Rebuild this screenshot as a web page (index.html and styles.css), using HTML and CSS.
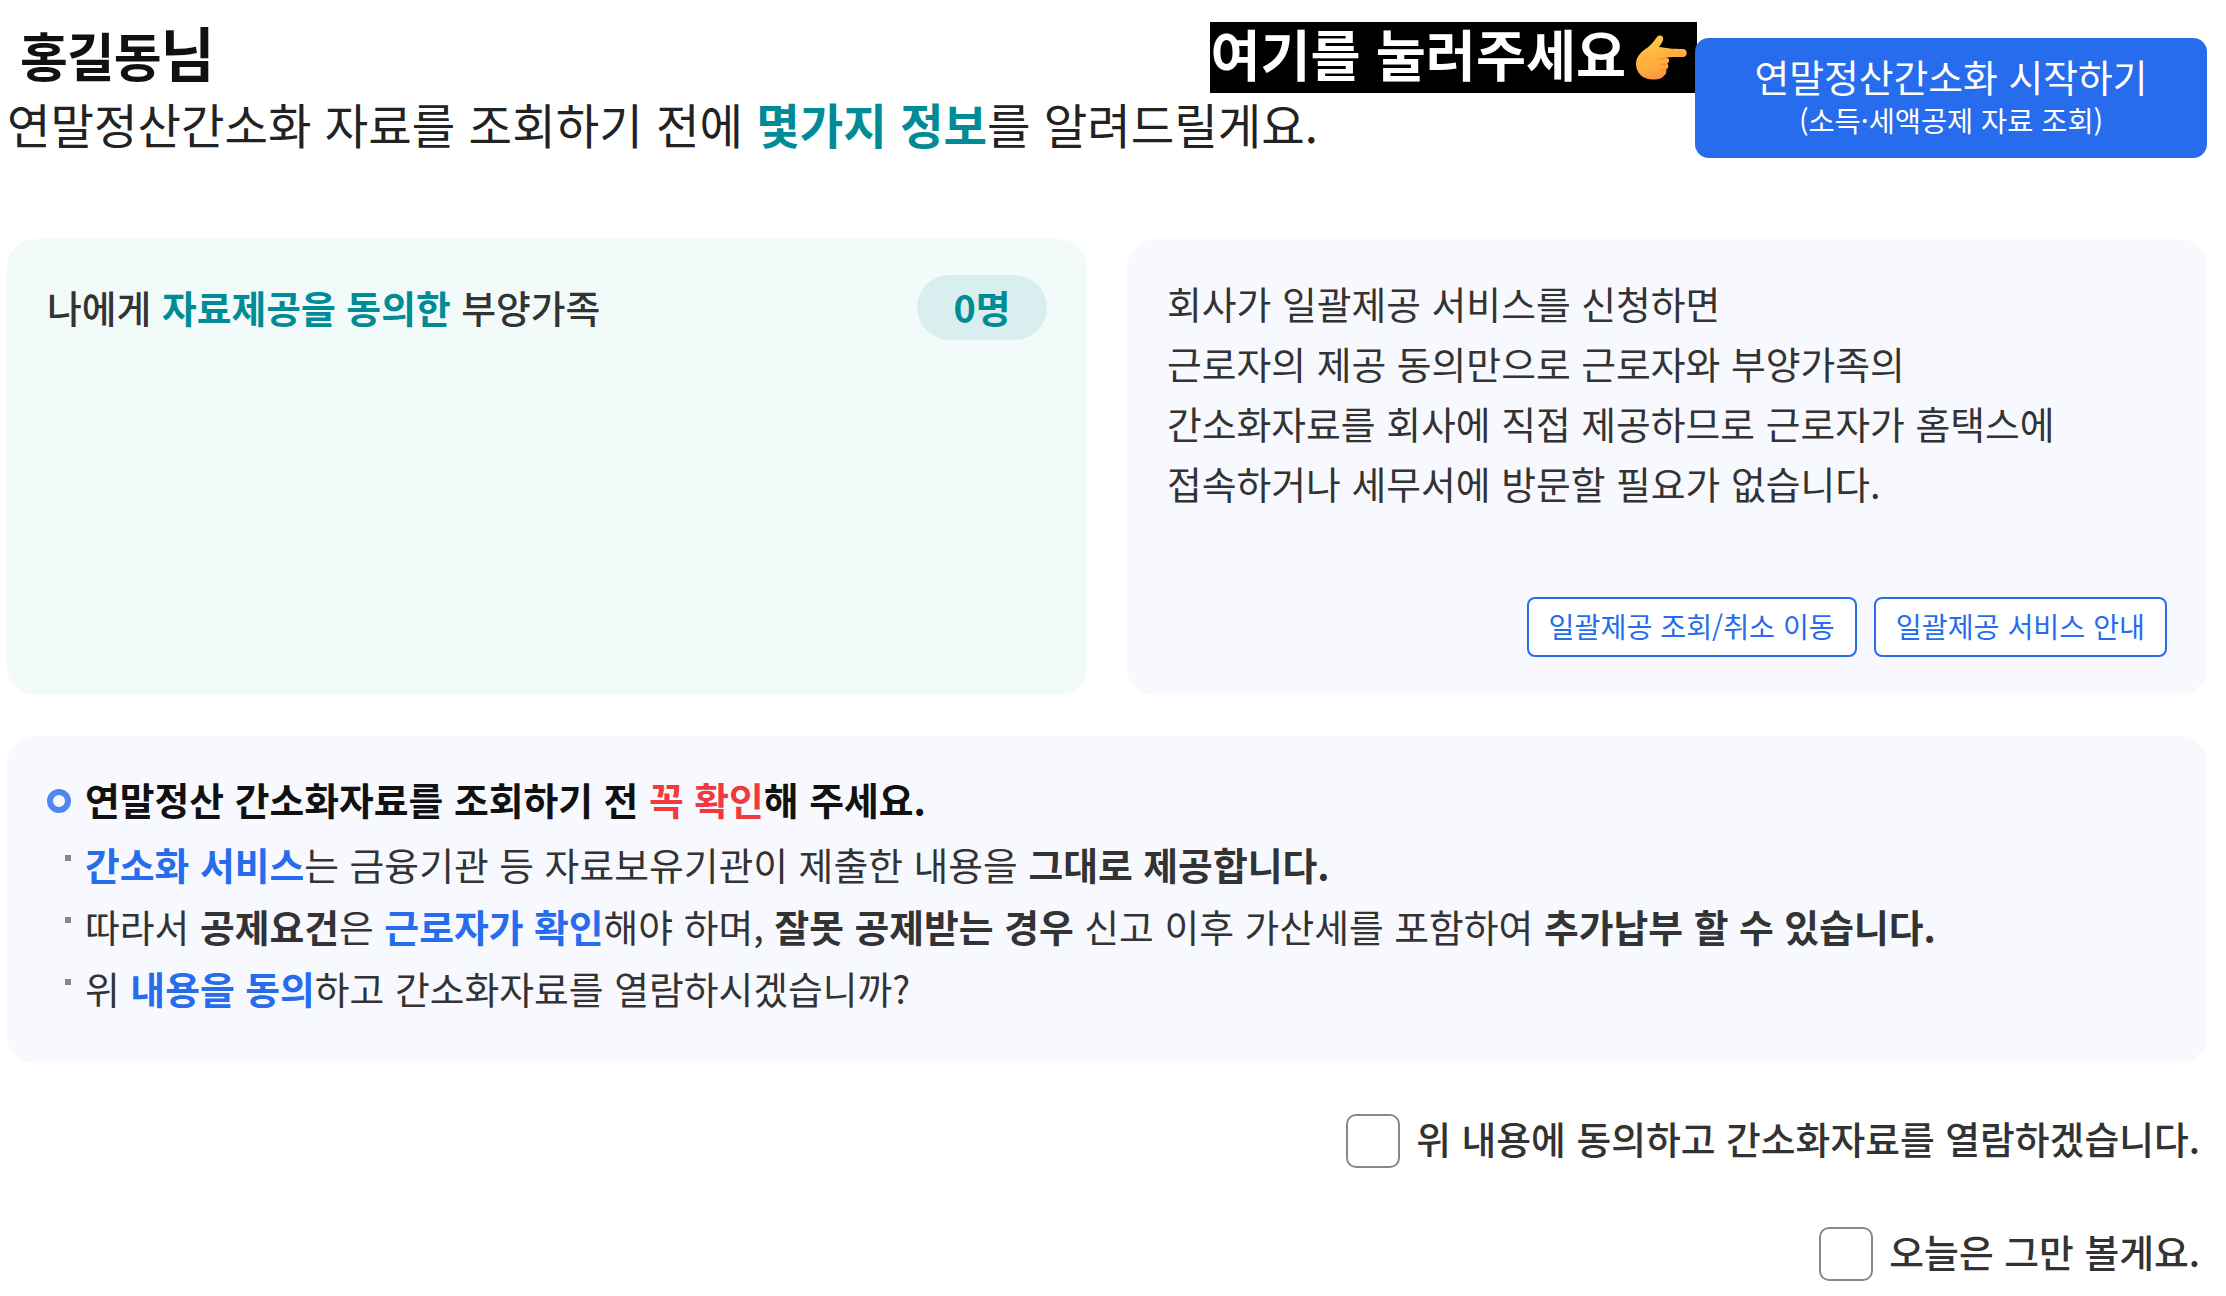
FILE: index.html
```html
<!DOCTYPE html>
<html lang="ko">
<head>
    <meta charset="utf-8">
    <title>연말정산간소화</title>
    <link rel="stylesheet" href="styles.css">
</head>
<body>
    <div class="page">
        <header class="top">
            <div class="intro">
                <h1 class="name">홍길동<span class="name-end">님</span></h1>
                <p class="lead">연말정산간소화 자료를 조회하기 전에 <strong class="teal">몇가지 정보</strong>를 알려드릴게요.</p>
            </div>
            <div class="top-action">
                <div class="hint">
                    <span>여기를 눌러주세요</span>
                    <svg class="hand" viewBox="0 0 56 50" aria-hidden="true">
                        <defs>
                            <linearGradient id="handFill" x1="0.2" y1="0" x2="0.6" y2="1">
                                <stop offset="0" stop-color="#ffc94d"/>
                                <stop offset="0.7" stop-color="#ffa93a"/>
                                <stop offset="1" stop-color="#f58a4a"/>
                            </linearGradient>
                        </defs>
                        <path fill="url(#handFill)" d="M23 3c3-3 7-1 6 3-.5 2-2 4-4 7 7 1 14 2 24 2 5 0 5 8 0 8-7 0-12 0-17 .5 4 0 4 5 1 6 2 1 2 5-1 6 1 2 0 5-2 6-2 3-5 4-10 4C9 46 2 39 2 30 2 22 8 17 13 14c4-3 7-7 10-11z"/>
                        <path fill="none" stroke="#e8902f" stroke-width="1.2" stroke-linecap="round" d="M33 24l-8 1M33 30l-7 .5M32 36l-6 0"/>
                    </svg>
                </div>
                <button class="start-btn" type="button">
                    <span class="start-main">연말정산간소화 시작하기</span>
                    <span class="start-sub">(소득·세액공제 자료 조회)</span>
                </button>
            </div>
        </header>

        <section class="cards">
            <div class="card card-green">
                <div class="family">
                    <p>나에게 <strong class="teal">자료제공을 동의한</strong> 부양가족</p>
                    <span class="count">0명</span>
                </div>
            </div>
            <div class="card card-blue card-info">
                <p class="info">회사가 일괄제공 서비스를 신청하면<br>근로자의 제공 동의만으로 근로자와 부양가족의<br>간소화자료를 회사에 직접 제공하므로 근로자가 홈택스에<br>접속하거나 세무서에 방문할 필요가 없습니다.</p>
                <div class="info-btns">
                    <button class="line-btn" type="button">일괄제공 조회/취소 이동</button>
                    <button class="line-btn" type="button">일괄제공 서비스 안내</button>
                </div>
            </div>
        </section>

        <section class="notice">
            <h2 class="notice-title"><span class="ring"></span><span>연말정산 간소화자료를 조회하기 전 <span class="red">꼭 확인</span>해 주세요.</span></h2>
            <ul class="notice-list">
                <li><strong class="blue">간소화 서비스</strong>는 금융기관 등 자료보유기관이 제출한 내용을 <strong>그대로 제공합니다.</strong></li>
                <li>따라서 <strong>공제요건</strong>은 <strong class="blue">근로자가 확인</strong>해야 하며, <strong>잘못 공제받는 경우</strong> 신고 이후 가산세를 포함하여 <strong>추가납부 할 수 있습니다.</strong></li>
                <li>위 <strong class="blue">내용을 동의</strong>하고 간소화자료를 열람하시겠습니까?</li>
            </ul>
        </section>

        <div class="checks">
            <label class="check"><input type="checkbox"><span>위 내용에 동의하고 간소화자료를 열람하겠습니다.</span></label>
            <label class="check"><input type="checkbox"><span>오늘은 그만 볼게요.</span></label>
        </div>
    </div>
</body>
</html>
```

FILE: styles.css
```css
* {
    box-sizing: border-box;
}

body {
    margin: 0;
    background: #fff;
    color: #333;
    font-family: "Noto Sans CJK KR", "Noto Sans", sans-serif;
}

p, h1, h2, ul {
    margin: 0;
    padding: 0;
}

.page {
    padding: 22px 19px 0 7px;
}

.teal {
    color: #008c96;
    font-weight: 700;
}

.blue {
    color: #266cec;
}

.red {
    color: #f03a40;
}

strong {
    font-weight: 700;
}

/* top */
.top {
    display: flex;
    justify-content: space-between;
    align-items: flex-start;
    height: 217px;
}

.intro {
    flex: none;
    width: 1200px;
    white-space: nowrap;
}

.name {
    padding: 5px 0 0 13px;
    color: #111;
    font-size: 52px;
    font-weight: 700;
    line-height: 50px;
    letter-spacing: -1px;
}

.name-end {
    font-size: 59px;
}

.lead {
    margin-top: 14px;
    color: #222;
    font-size: 47.3px;
    line-height: 60px;
}

.top-action {
    display: flex;
    align-items: flex-start;
}

.hint {
    display: flex;
    align-items: center;
    gap: 8px;
    height: 71px;
    padding: 0 7px 11px 0;
    background: #000;
    color: #fff;
    font-size: 54.4px;
    font-weight: 700;
    white-space: nowrap;
}

.hand {
    width: 56px;
    height: 50px;
    margin-top: 14px;
}

.start-btn {
    display: flex;
    flex-direction: column;
    align-items: center;
    justify-content: center;
    width: 512px;
    height: 120px;
    margin: 16px 0 0 -2px;
    padding: 0 0 7px;
    border: 0;
    border-radius: 14px;
    background: #266cec;
    color: #fff;
    font-family: inherit;
}

.start-main {
    font-size: 37.8px;
    line-height: 50px;
}

.start-sub {
    font-size: 28.4px;
    line-height: 38px;
}

/* cards */
.cards {
    display: flex;
    gap: 40px;
}

.card {
    flex: 1;
    height: 456px;
    border-radius: 28px;
    padding: 35px 40px;
}

.card-green {
    background: #f3fbfa;
}

.card-blue {
    background: #f8f9ff;
}

.family {
    display: flex;
    justify-content: space-between;
    align-items: center;
    font-size: 37.8px;
    font-weight: 500;
}

.family p {
    margin-bottom: 2px;
}

.count {
    width: 130px;
    height: 65px;
    margin-top: 1px;
    border-radius: 33px;
    background: #d9eeee;
    color: #008c96;
    font-size: 37.8px;
    font-weight: 700;
    line-height: 63px;
    text-align: center;
}

.card-info {
    display: flex;
    flex-direction: column;
    justify-content: space-between;
    padding-top: 34px;
    padding-bottom: 38px;
}

.info {
    font-size: 37.8px;
    line-height: 60px;
}

.info-btns {
    display: flex;
    justify-content: flex-end;
    gap: 17px;
}

.line-btn {
    height: 60px;
    padding: 0 20px 4px;
    border: 2px solid #266cec;
    border-radius: 8px;
    background: #fff;
    color: #266cec;
    font-family: inherit;
    font-size: 28.2px;
}

/* notice */
.notice {
    height: 327px;
    margin-top: 41px;
    padding: 38px 40px;
    border-radius: 28px;
    background: #f8f9ff;
}

.notice-title {
    display: flex;
    align-items: center;
    color: #111;
    font-size: 37.8px;
    font-weight: 700;
    line-height: 50px;
}

.ring {
    width: 24px;
    height: 24px;
    margin: 3px 14px 0 0;
    border: 6px solid #4f86f0;
    border-radius: 50%;
}

.notice-list {
    margin-top: 9px;
    list-style: none;
}

.notice-list li {
    position: relative;
    padding-left: 38px;
    font-size: 37.8px;
    line-height: 62px;
}

.notice-list li::before {
    content: "";
    position: absolute;
    left: 18px;
    top: 22px;
    width: 6px;
    height: 6px;
    background: #888;
}

/* agree checks */
.checks {
    display: flex;
    flex-direction: column;
    align-items: flex-end;
    gap: 59px;
    margin-top: 51px;
    padding-right: 7px;
}

.check {
    display: flex;
    align-items: center;
    gap: 16px;
    height: 54px;
    font-size: 37.8px;
    font-weight: 500;
    line-height: 48px;
}

.check span {
    margin-bottom: 6px;
}

.check input {
    appearance: none;
    width: 54px;
    height: 54px;
    margin: 0;
    border: 2px solid #888;
    border-radius: 10px;
    background: #fff;
}
```
